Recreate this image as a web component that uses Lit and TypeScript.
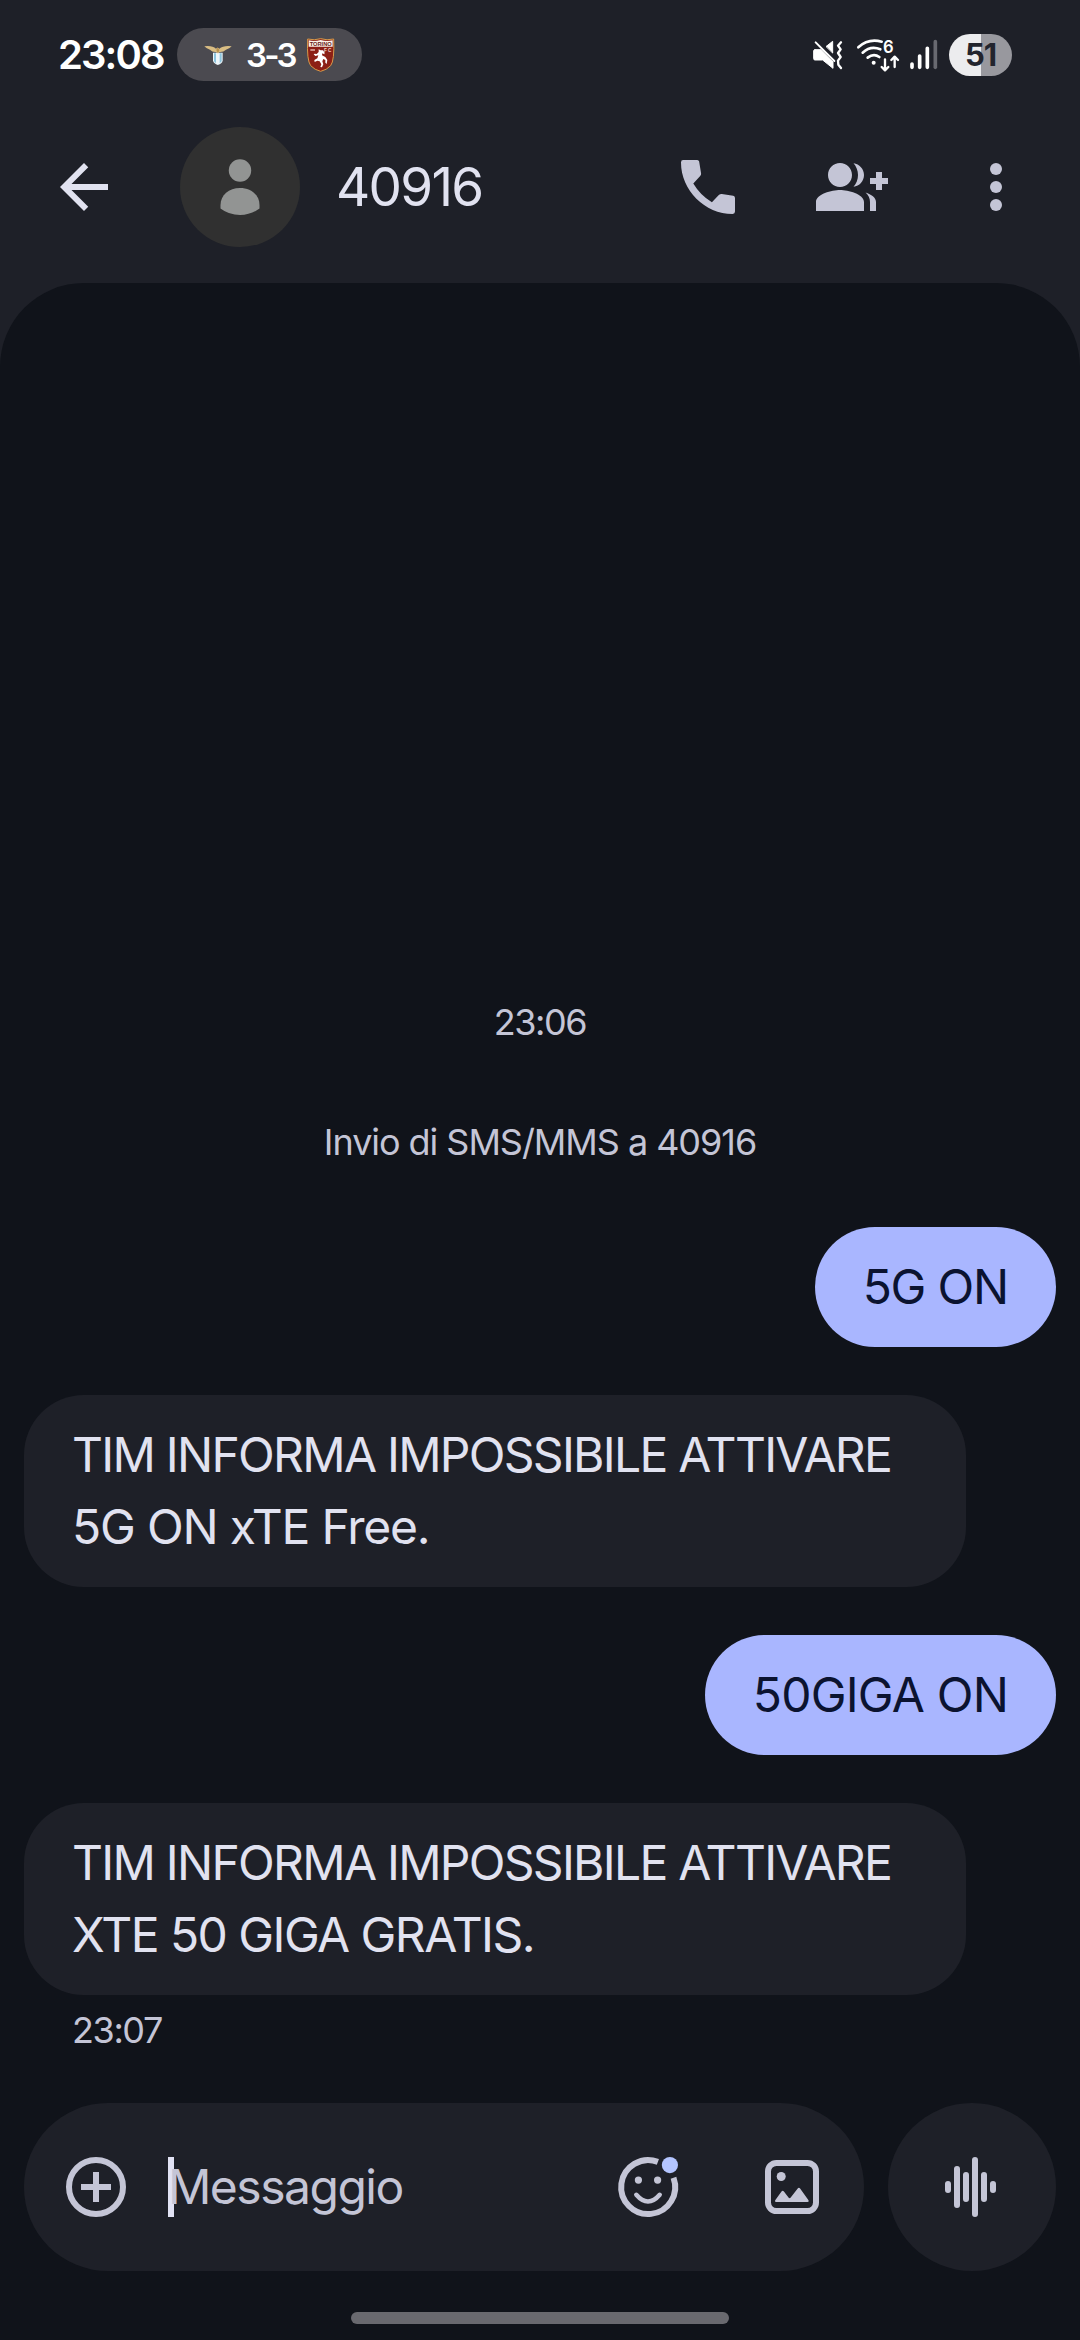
import { LitElement, html, css, svg } from "lit";
import { customElement, property } from "lit/decorators.js";
import { styleMap } from "lit/directives/style-map.js";

interface Line {
  text: string;
  tracking: number;
}

interface Message {
  lines: Line[];
  sent: boolean;
  time?: string;
}

const messages: Message[] = [
  { lines: [{ text: "5G ON", tracking: -1.2 }], sent: true },
  {
    lines: [
      { text: "TIM INFORMA IMPOSSIBILE ATTIVARE", tracking: -1.72 },
      { text: "5G ON xTE Free.", tracking: -1.2 },
    ],
    sent: false,
  },
  { lines: [{ text: "50GIGA ON", tracking: -0.8 }], sent: true },
  {
    lines: [
      { text: "TIM INFORMA IMPOSSIBILE ATTIVARE", tracking: -1.72 },
      { text: "XTE 50 GIGA GRATIS.", tracking: -1.55 },
    ],
    sent: false,
    time: "23:07",
  },
];

const icons: Record<string, unknown> = {
  back: svg`<path d="M20 11H7.83l5.59-5.59L12 4l-8 8 8 8 1.41-1.41L7.83 13H20z"/>`,
  call: svg`<path d="M3.7 3H8.4Q8.95 3 9.05 3.5L9.7 7.5Q9.75 7.95 9.4 8.35L7.1 10.8Q9.4 14.7 13.3 17.05L15.6 14.7Q16.05 14.25 16.6 14.3L20.4 14.95Q21 15.1 21 15.7V20.2Q21 21 20.2 21C11 21 3 13 3 3.8Q3 3 3.7 3z"/>`,
  group: svg`<path d="M22 9V7h-2v2h-2v2h2v2h2v-2h2V9zM8 12c2.21 0 4-1.79 4-4s-1.79-4-4-4-4 1.79-4 4 1.79 4 4 4zM8 13c-2.67 0-8 1.34-8 4v3h16v-3c0-2.66-5.33-4-8-4zM12.51 4.05C13.43 5.11 14 6.49 14 8s-.57 2.89-1.49 3.95C14.47 11.7 16 10.04 16 8s-1.53-3.7-3.49-3.95zM16.53 13.83C17.42 14.66 18 15.7 18 17v3h2v-3c0-1.45-1.59-2.51-3.47-3.17z"/>`,
  more: svg`<circle cx="12" cy="6" r="2"/><circle cx="12" cy="12" r="2"/><circle cx="12" cy="18" r="2"/>`,
  plus: svg`<circle cx="12" cy="12" r="9" fill="none" stroke="currentColor" stroke-width="2"/><path d="M11 7h2v4h4v2h-4v4h-2v-4H7v-2h4z"/>`,
  emoji: svg`<path d="M15.3 3.62A9 9 0 1 0 20.5 8.9" fill="none" stroke="currentColor" stroke-width="2"/><circle cx="8.8" cy="9.7" r="1.2"/><circle cx="15.2" cy="9.7" r="1.2"/><path d="M8.1 14.6q3.9 4.5 7.8 0" fill="none" stroke="currentColor" stroke-width="1.5" stroke-linecap="round"/><circle cx="19.3" cy="4.7" r="2.7" fill="#b4c5ff"/>`,
  image: svg`<rect x="4" y="4" width="16" height="16" rx="2.8" fill="none" stroke="currentColor" stroke-width="2"/><circle cx="8.4" cy="8.5" r="1.5"/><path d="M6.7 17h10.5q.6-.1.3-.6l-2.8-3.9q-.4-.5-.8 0l-2.4 3.1q-.3.3-.6 0l-1.6-2.1q-.4-.5-.8 0L6.4 16.4q-.3.5.3.6z"/>`,
  wave: svg`<g stroke="currentColor" stroke-width="2" stroke-linecap="round"><path d="M3 11v2M6 6v12M9 8v8M12 3v18M15 8v8M18 11v2"/></g>`,
};

@customElement("ui-icon")
class UiIcon extends LitElement {
  @property() name = "";
  static styles = css`
    :host { display: block; width: 72px; height: 72px; flex: none; }
    .glyph { display: block; width: 100%; height: 100%; fill: currentColor; }
  `;
  render() {
    return html`<svg class="glyph" viewBox="0 0 24 24">${icons[this.name]}</svg>`;
  }
}

@customElement("status-bar")
class StatusBar extends LitElement {
  static styles = css`
    :host { display: flex; align-items: center; height: 109px; padding: 0 68px 0 58px; color: #fff; }
    .clock { font-size: 40px; font-weight: 600; line-height: 48px; width: 119px; white-space: nowrap; letter-spacing: -1.9px; }
    .score { display: flex; align-items: center; width: 185px; height: 53px; border-radius: 27px; background: #4b4a50; }
    .eagle { width: 30px; height: 22px; margin-left: 26px; }
    .result { width: 50px; margin-left: 13px; font-size: 33px; font-weight: 600; line-height: 40px; letter-spacing: -2.8px; white-space: nowrap; }
    .crest { width: 30px; height: 36px; margin-left: 10px; }
    .crest-name { font: 700 18px "Liberation Sans", sans-serif; fill: #6a2118; }
    .crest-club { font: 700 14px "Liberation Sans", sans-serif; fill: #f2d9c9; }
    .spacer { flex: 1; }
    .mute { width: 32px; height: 34px; margin-right: 12px; }
    .wifi { width: 46px; height: 54px; margin-right: 7px; }
    .wifi-gen { font: 600 50px Inter, sans-serif; fill: #fff; }
    .signal { width: 30px; height: 34px; margin-right: 10px; }
    .battery { display: flex; align-items: center; justify-content: center; width: 63px; height: 42px; border-radius: 21px; background: linear-gradient(90deg, #ececee 0 51%, #98989e 51%); color: #22242d; font-size: 31px; font-weight: 700; letter-spacing: -1px; }
    svg { display: block; flex: none; }
  `;
  render() {
    return html`
      <div class="clock">23:08</div>
      <div class="score">
        <svg class="eagle" viewBox="519 98 90 66">
          <path d="M523 105Q547 102 558 112Q563 106 568 112Q580 102 605 105Q598 113 588 115Q580 123 568 122L564 128L558 122Q547 123 540 115Q530 113 523 105z" fill="#d9bd83"/>
          <path d="M549 124h29v24q-2 9-14.5 13q-12-4-14.5-13z" fill="#eef6fa"/>
          <path d="M552 126h6v30l-6-6zM569 126h6v24l-6 6z" fill="#8cc4dd"/>
          <path d="M563 108l5 8-4 11-5-11z" fill="#b9924e"/>
        </svg>
        <div class="result">3-3</div>
        <svg class="crest" viewBox="830 80 90 108">
          <path d="M835 86Q855 91 874 85Q893 91 913 86Q916 150 904 166Q892 179 874 183Q856 179 844 166Q832 150 835 86z" fill="#8c2016" stroke="#d79a4a" stroke-width="3"/>
          <path d="M838 90q18 4 36-1 18 5 36 1v19h-72z" fill="#fbf3ea"/>
          <text class="crest-name" x="841" y="107" textLength="66" lengthAdjust="spacingAndGlyphs">TORINO</text>
          <text class="crest-club" x="884" y="126" textLength="22">FC</text>
          <path d="M868 117l6 3 7 0 5 7-1 5-6-3-1 6 10 5 6 9-2 12-4-4 0-8-6-3-3 7 3 9-4 9-5-1 3-8-5-9-7-2-8 4-1-6 9-5 3-9-9 2-5-5 3-2 6 1 6-6z" fill="#fff"/>
          <path d="M843 119h14" stroke="#d9a49a" stroke-width="5"/>
        </svg>
      </div>
      <div class="spacer"></div>
      <svg class="mute" viewBox="96 84 96 102" fill="#fff" stroke="#fff" stroke-linejoin="round" stroke-linecap="round">
        <path d="M105 119H124L159 156V175L128 150H105Q101 150 101 146V123Q101 119 105 119z" stroke-width="3"/>
        <path d="M107 97L163 153" stroke-width="6"/>
        <path d="M139 109L158 94V128z" stroke-width="3"/>
        <path d="M183 97L174 107L182 118L174 129L182 141L174 152L175 164L183 174" fill="none" stroke-width="7"/>
      </svg>
      <svg class="wifi" viewBox="229 54 138 162" fill="none" stroke="#fff" stroke-width="8" stroke-linecap="round" stroke-linejoin="round">
        <path d="M236 112Q266 84 306 95M249 128Q273 106 302 118M264 143Q282 129 299 141"/>
        <circle cx="282" cy="158" r="6" fill="#fff" stroke="none"/>
        <text class="wifi-gen" x="310" y="129" stroke="none">6</text>
        <path d="M316 148V180M306 171L316 181L326 171M345 171V141M335 150L345 140L355 150" stroke-width="7"/>
      </svg>
      <svg class="signal" viewBox="386 84 90 102" stroke="#fff" stroke-width="11" stroke-linecap="round">
        <path d="M395 162V172M418 138V172M441 115V172"/>
        <path d="M465 95V172" stroke="#686970"/>
      </svg>
      <div class="battery">51</div>
    `;
  }
}

@customElement("chat-header")
class ChatHeader extends LitElement {
  static styles = css`
    :host { display: flex; align-items: center; height: 156px; padding: 0 48px; margin-bottom: 18px; color: #c4c5d6; }
    .back { color: #e1e2f0; }
    .avatar { display: block; width: 120px; height: 120px; margin: 0 36px 0 60px; flex: none; }
    .title { flex: 1; color: #e1e2f0; font-size: 53px; line-height: 64px; letter-spacing: -1.7px; }
    .actions { display: flex; gap: 72px; }
  `;
  render() {
    return html`
      <ui-icon class="back" name="back"></ui-icon>
      <svg class="avatar" viewBox="0 0 120 120">
        <circle cx="60" cy="60" r="60" fill="#303030"/>
        <circle cx="60" cy="43.5" r="11.2" fill="#929493"/>
        <path d="M40.5 81.5V78C40.5 68 49 61 60 61S79.5 68 79.5 78V81.5Q71 88 60 88T40.5 81.5z" fill="#929493"/>
      </svg>
      <div class="title">40916</div>
      <div class="actions">
        <ui-icon name="call"></ui-icon>
        <ui-icon name="group"></ui-icon>
        <ui-icon name="more"></ui-icon>
      </div>
    `;
  }
}

@customElement("chat-message")
class ChatMessage extends LitElement {
  @property({ attribute: false }) message!: Message;
  static styles = css`
    :host { display: flex; flex-direction: column; }
    .bubble { box-sizing: border-box; padding: 24px 48px; border-radius: 60px; font-size: 48px; line-height: 72px; white-space: nowrap; }
    .received { width: 942px; align-self: flex-start; background: #1e2028; color: #e1e2f0; }
    .sent { align-self: flex-end; background: #a9b6ff; color: #0b1330; }
    .time { margin-left: 48px; padding-top: 11px; font-size: 36px; line-height: 48px; letter-spacing: -1.4px; color: #c4c5d6; }
  `;
  render() {
    const { lines, sent, time } = this.message;
    return html`
      <div class="bubble ${sent ? "sent" : "received"}">
        ${lines.map((l) => html`<div style=${styleMap({ letterSpacing: `${l.tracking}px` })}>${l.text}</div>`)}
      </div>
      ${time ? html`<div class="time">${time}</div>` : null}
    `;
  }
}

@customElement("chat-composer")
class ChatComposer extends LitElement {
  static styles = css`
    :host { display: flex; gap: 24px; height: 168px; color: #c4c5d6; }
    .field { flex: 1; box-sizing: border-box; display: flex; align-items: center; padding: 0 36px; border-radius: 84px; background: #1e2028; }
    .input { position: relative; flex: 1; margin-left: 36px; font-size: 48px; line-height: 60px; }
    .caret { position: absolute; left: 0; top: 0; width: 6px; height: 60px; background: #e1e2f4; }
    .label { position: relative; letter-spacing: -1.5px; }
    .tools { display: flex; gap: 72px; }
    .voice { display: grid; place-items: center; width: 168px; border-radius: 50%; background: #1e2028; }
    .wave { transform: translateX(3px); }
  `;
  render() {
    return html`
      <div class="field">
        <ui-icon name="plus"></ui-icon>
        <div class="input"><span class="caret"></span><span class="label">Messaggio</span></div>
        <div class="tools">
          <ui-icon name="emoji"></ui-icon>
          <ui-icon name="image"></ui-icon>
        </div>
      </div>
      <div class="voice"><ui-icon class="wave" name="wave"></ui-icon></div>
    `;
  }
}

@customElement("app-root")
class AppRoot extends LitElement {
  static styles = css`
    :host { display: flex; flex-direction: column; height: 2340px; width: 1080px; background: #1e2028; font-family: Inter, Roboto, "Liberation Sans", sans-serif; overflow: hidden; }
    .thread { flex: 1; box-sizing: border-box; display: flex; flex-direction: column; justify-content: flex-end; padding: 0 24px 16px; border-radius: 84px 84px 0 0; background: #10131a; }
    .note { text-align: center; font-size: 36px; line-height: 48px; letter-spacing: -1.4px; color: #c4c5d6; }
    .intro { margin: 72px 0 61px; letter-spacing: -1.05px; }
    .messages { display: flex; flex-direction: column; gap: 48px; margin-bottom: 49px; }
    .handle { align-self: center; width: 378px; height: 12px; margin-top: 41px; border-radius: 6px; background: #69696f; }
  `;
  render() {
    return html`
      <status-bar></status-bar>
      <chat-header></chat-header>
      <main class="thread">
        <div class="note">23:06</div>
        <div class="note intro">Invio di SMS/MMS a 40916</div>
        <div class="messages">
          ${messages.map((m) => html`<chat-message .message=${m}></chat-message>`)}
        </div>
        <chat-composer></chat-composer>
        <div class="handle"></div>
      </main>
    `;
  }
}
